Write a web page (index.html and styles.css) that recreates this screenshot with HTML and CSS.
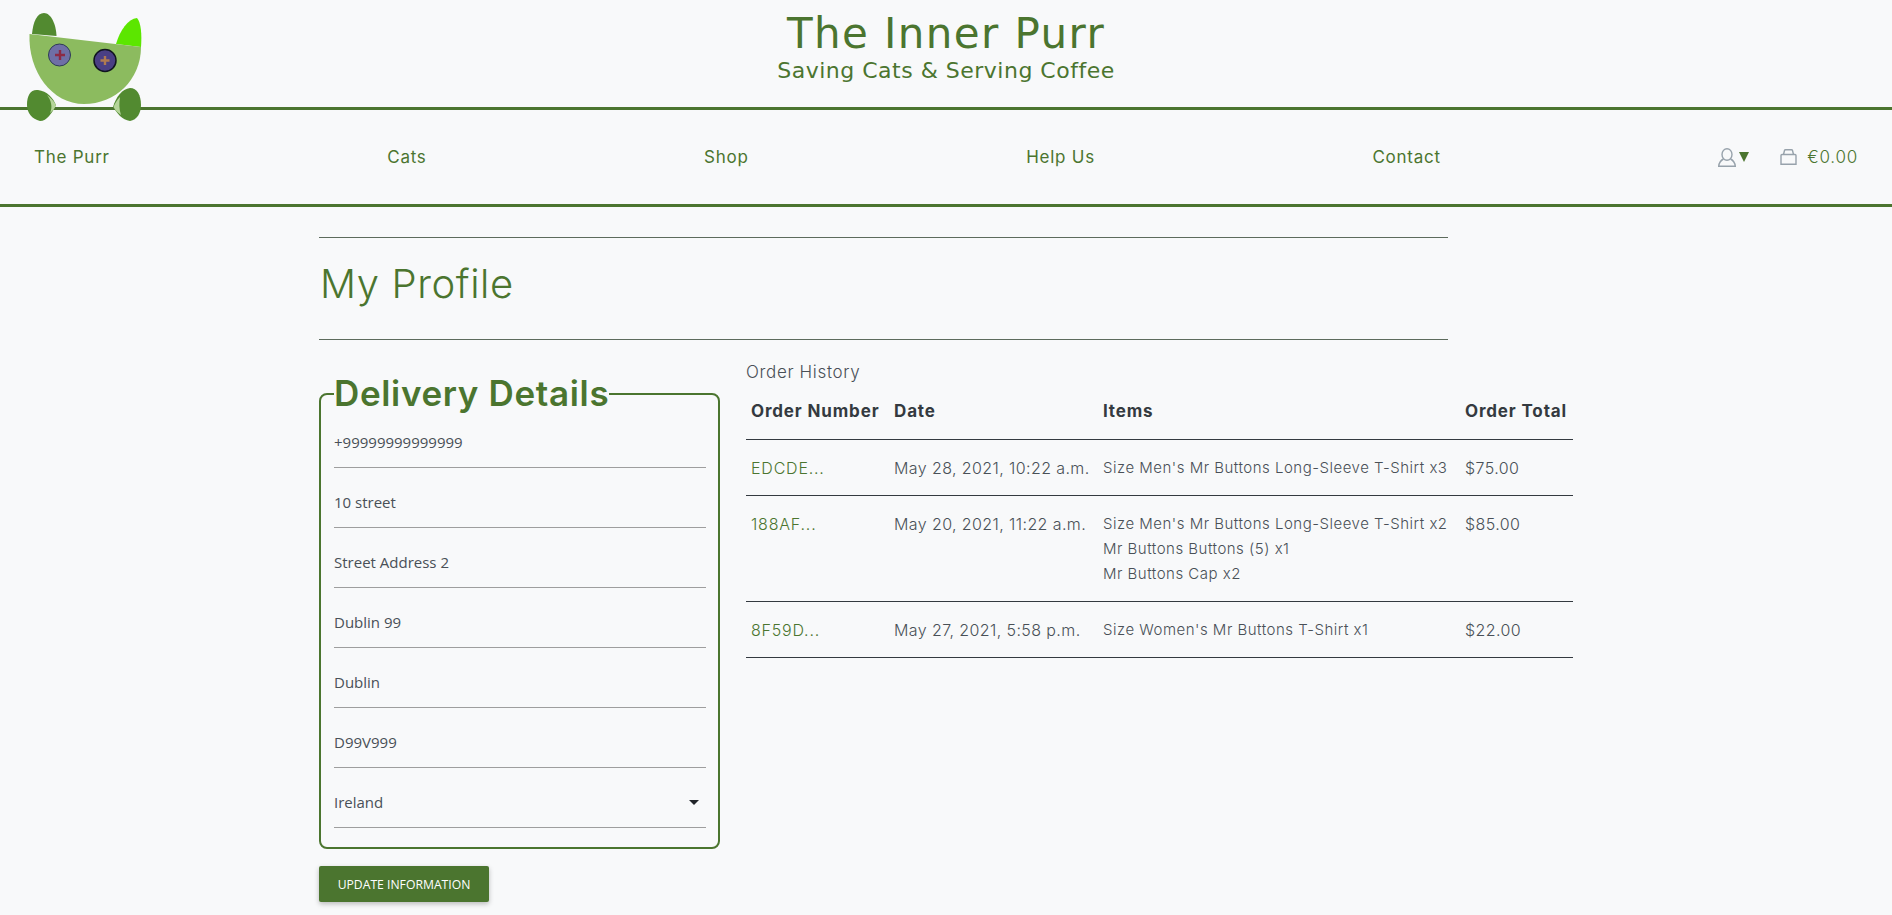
FILE: index.html
```html
<!DOCTYPE html>
<html lang="en">
<head>
<meta charset="utf-8">
<title>The Inner Purr</title>
<link rel="stylesheet" href="styles.css">
</head>
<body>
<header class="masthead">
  <svg class="logo" viewBox="0 0 142 122" width="142" height="122" aria-label="The Inner Purr logo">
    <path d="M32 34C33 22 37 13 44 13C51 13 56 24 56.500 36Z" fill="#528a30"/>
    <path d="M116 44C120 30 128 19 137 18C141 22 142 35 141 47Z" fill="#5ce600"/>
    <path d="M29.500 34L141 47C141 80 115 104 84 104C52 104 28 72 29.500 34Z" fill="#8cbb5f"/>
    <circle cx="59.500" cy="55" r="11" fill="#6f6fa6" stroke="#2d3a55" stroke-width="1"/>
    <path d="M60 50V60M55 55H65" stroke="#8c2a45" stroke-width="2.400"/>
    <circle cx="105" cy="60.500" r="11" fill="#4a3f84" stroke="#10151f" stroke-width="1.500"/>
    <path d="M105 56V65M100.500 60.500H109.500" stroke="#b07a50" stroke-width="2.400"/>
    <path d="M27 105C27 95 31 89 38 90C47 91 53 98 56 105C52 113 47 121 40 121C32 119 27 113 27 105Z" fill="#528a30"/>
    <path d="M47 95C51 98 54 101 56 105C55 108 53 111 50 113C53 107 51 100 47 95Z" fill="#b5d59a"/>
    <path d="M141 105C141 95 137 88 130 88C122 89 116 97 113 107C117 113 122 120 130 121C137 120 141 113 141 105Z" fill="#528a30"/>
    <path d="M120 97C117 100 115 103 113.500 107C115 110 118 113 121 115C119 109 119 103 120 97Z" fill="#b5d59a"/>
  </svg>
  <div class="brand">
    <h1 class="brand-title">The Inner Purr</h1>
    <p class="brand-tag">Saving Cats &amp; Serving Coffee</p>
  </div>
</header>
<nav class="nav">
  <a class="nav-link" href="#">The Purr</a>
  <a class="nav-link" href="#">Cats</a>
  <a class="nav-link" href="#">Shop</a>
  <a class="nav-link" href="#">Help Us</a>
  <a class="nav-link" href="#">Contact</a>
  <div class="nav-tools">
    <a class="tool-user" href="#">
      <svg viewBox="0 0 18 19" width="18" height="19" class="tool-icon"><ellipse cx="9" cy="6.500" rx="5" ry="5.800"/><path d="M5.500 11C2.500 12.500 1 15 .7 18.300H17.300C17 15 15.500 12.500 12.500 11"/></svg>
      <span class="caret-big"></span>
    </a>
    <a class="tool-cart" href="#">
      <svg viewBox="0 0 17 16" width="17" height="16" class="tool-icon"><path d="M1 6.500Q1 5.500 2 5.500H15Q16 5.500 16 6.500V15.200H1Z"/><path d="M3.500 5.500L4.500 1.500Q4.700 .7 5.500 .7H11.500Q12.300 .7 12.500 1.500L13.500 5.500"/></svg>
      <span>€0.00</span>
    </a>
  </div>
</nav>
<main class="page">
  <div class="page-head">
    <h2 class="page-title">My Profile</h2>
  </div>
  <div class="columns">
    <section class="col-form">
      <fieldset class="details">
        <legend class="details-legend">Delivery Details</legend>
        <input class="field field-first" type="text" value="+99999999999999">
        <input class="field" type="text" value="10 street">
        <input class="field" type="text" value="Street Address 2">
        <input class="field" type="text" value="Dublin 99">
        <input class="field" type="text" value="Dublin">
        <input class="field" type="text" value="D99V999">
        <div class="select-wrap">
          <input class="field" type="text" value="Ireland">
          <span class="select-caret"></span>
        </div>
      </fieldset>
      <button class="update-btn" type="button">Update Information</button>
    </section>
    <section class="col-orders">
      <p class="orders-title">Order History</p>
      <table class="orders">
        <thead>
          <tr><th class="c-num">Order Number</th><th class="c-date">Date</th><th class="c-items">Items</th><th class="c-total">Order Total</th></tr>
        </thead>
        <tbody>
          <tr>
            <td><a class="order-link" href="#">EDCDE...</a></td>
            <td>May 28, 2021, 10:22 a.m.</td>
            <td class="items"><p>Size Men's Mr Buttons Long-Sleeve T-Shirt x3</p></td>
            <td>$75.00</td>
          </tr>
          <tr>
            <td><a class="order-link" href="#">188AF...</a></td>
            <td>May 20, 2021, 11:22 a.m.</td>
            <td class="items"><p>Size Men's Mr Buttons Long-Sleeve T-Shirt x2</p><p>Mr Buttons Buttons (5) x1</p><p>Mr Buttons Cap x2</p></td>
            <td>$85.00</td>
          </tr>
          <tr>
            <td><a class="order-link" href="#">8F59D...</a></td>
            <td>May 27, 2021, 5:58 p.m.</td>
            <td class="items"><p>Size Women's Mr Buttons T-Shirt x1</p></td>
            <td>$22.00</td>
          </tr>
        </tbody>
      </table>
    </section>
  </div>
</main>
</body>
</html>
```
FILE: styles.css
```css
* { box-sizing: border-box; }
html, body { margin: 0; padding: 0; height: 915px; overflow: hidden; }
body {
  background: #f8f9fa;
  color: #495057;
  font-family: Inter, "Liberation Sans", sans-serif;
}
a { color: inherit; text-decoration: none; }

.masthead {
  height: 110px;
  border-bottom: 3px solid #4b752f;
  display: flex;
  justify-content: center;
  position: relative;
}
.logo { position: absolute; left: 0; top: 0; }
.brand { text-align: center; padding-top: 10px; }
.brand-title {
  margin: 0;
  font-family: "DejaVu Sans", sans-serif;
  font-weight: 400;
  font-size: 42px;
  line-height: 48px;
  letter-spacing: 1.4px;
  color: #4b752f;
}
.brand-tag {
  margin: 0;
  font-family: "DejaVu Sans", sans-serif;
  font-size: 22px;
  line-height: 26px;
  letter-spacing: 0.5px;
  color: #4b752f;
}

.nav {
  height: 97px;
  padding: 0 34px;
  border-bottom: 3px solid #4b752f;
  display: flex;
  align-items: center;
  justify-content: space-between;
  color: #4b752f;
}
.nav-link { font-size: 17px; letter-spacing: 0.75px; }
.nav-tools { display: flex; align-items: center; gap: 31px; }
.tool-user, .tool-cart { display: flex; align-items: center; }
.tool-user { gap: 3px; }
.tool-cart { gap: 10px; font-size: 17px; font-weight: 300; letter-spacing: 0.75px; }
.tool-icon { fill: none; stroke: #97a2ab; stroke-width: 1.400; }
.caret-big {
  width: 0; height: 0;
  border-left: 5.500px solid transparent;
  border-right: 5.500px solid transparent;
  border-top: 10px solid #4b752f;
}

.page { padding: 30px 0 0 319px; }
.page-head {
  width: 1129px;
  height: 103px;
  padding-bottom: 11px;
  border-top: 1px solid #5c6b5c;
  border-bottom: 1px solid #5c6b5c;
  display: flex;
  align-items: center;
}
.page-title {
  margin: 0;
  padding-left: 1px;
  font-size: 40px;
  font-weight: 300;
  letter-spacing: 0.6px;
  color: #4b752f;
}
.columns { display: flex; gap: 26px; padding-top: 18px; }
.col-form { width: 401px; padding-top: 18px; }
.details {
  margin: 0;
  padding: 0 12px 0 13px;
  height: 473px;
  border: 2px solid #4b752f;
  border-radius: 8px;
  min-width: 0;
}
.details-legend {
  padding: 0;
  font-size: 35px;
  line-height: 35px;
  font-weight: 600;
  letter-spacing: 0.65px;
  color: #4b752f;
}
.field {
  display: block;
  width: 100%;
  height: 60px;
  padding: 8px 0 0;
  border: 0;
  border-bottom: 1px solid #9e9e9e;
  background: transparent;
  font-family: "Open Sans", sans-serif;
  font-size: 15px;
  color: #495057;
  outline: none;
}
.field-first { margin-top: -3px; }
.select-wrap { position: relative; }
.select-caret {
  position: absolute;
  right: 7px;
  top: 32px;
  width: 0; height: 0;
  border-left: 5px solid transparent;
  border-right: 5px solid transparent;
  border-top: 5px solid #212529;
}
.update-btn {
  display: block;
  margin-top: 17px;
  width: 170px;
  height: 36px;
  border: 0;
  border-radius: 2px;
  background: #4b752f;
  color: #fff;
  font-family: "Open Sans", sans-serif;
  font-size: 12.200px;
  text-transform: uppercase;
  box-shadow: 0 2px 5px rgba(0,0,0,.25);
}

.col-orders { width: 827px; }
.orders-title {
  margin: 0;
  padding-top: 3px;
  font-size: 17px;
  font-weight: 300;
  line-height: 22px;
  letter-spacing: 0.65px;
}
.orders { border-collapse: collapse; table-layout: fixed; width: 827px; }
.orders th {
  height: 56px;
  padding: 0 5px;
  text-align: left;
  font-size: 17px;
  font-weight: 700;
  color: #343a40;
  border-bottom: 1px solid #343a40;
  letter-spacing: 0.85px;
}
.c-num { width: 143px; }
.c-date { width: 209px; }
.c-items { width: 362px; }
.orders td {
  padding: 15px 5px 14px;
  vertical-align: top;
  font-size: 16px;
  font-weight: 300;
  line-height: 26px;
  border-bottom: 1px solid #343a40;
  letter-spacing: 0.4px;
}
.orders .items { font-size: 15px; letter-spacing: 0.5px; }
.items p { margin: 0; line-height: 25px; }
.items p:last-child { margin-bottom: 1px; }
.order-link { color: #4b752f; letter-spacing: 0.8px; }
```
